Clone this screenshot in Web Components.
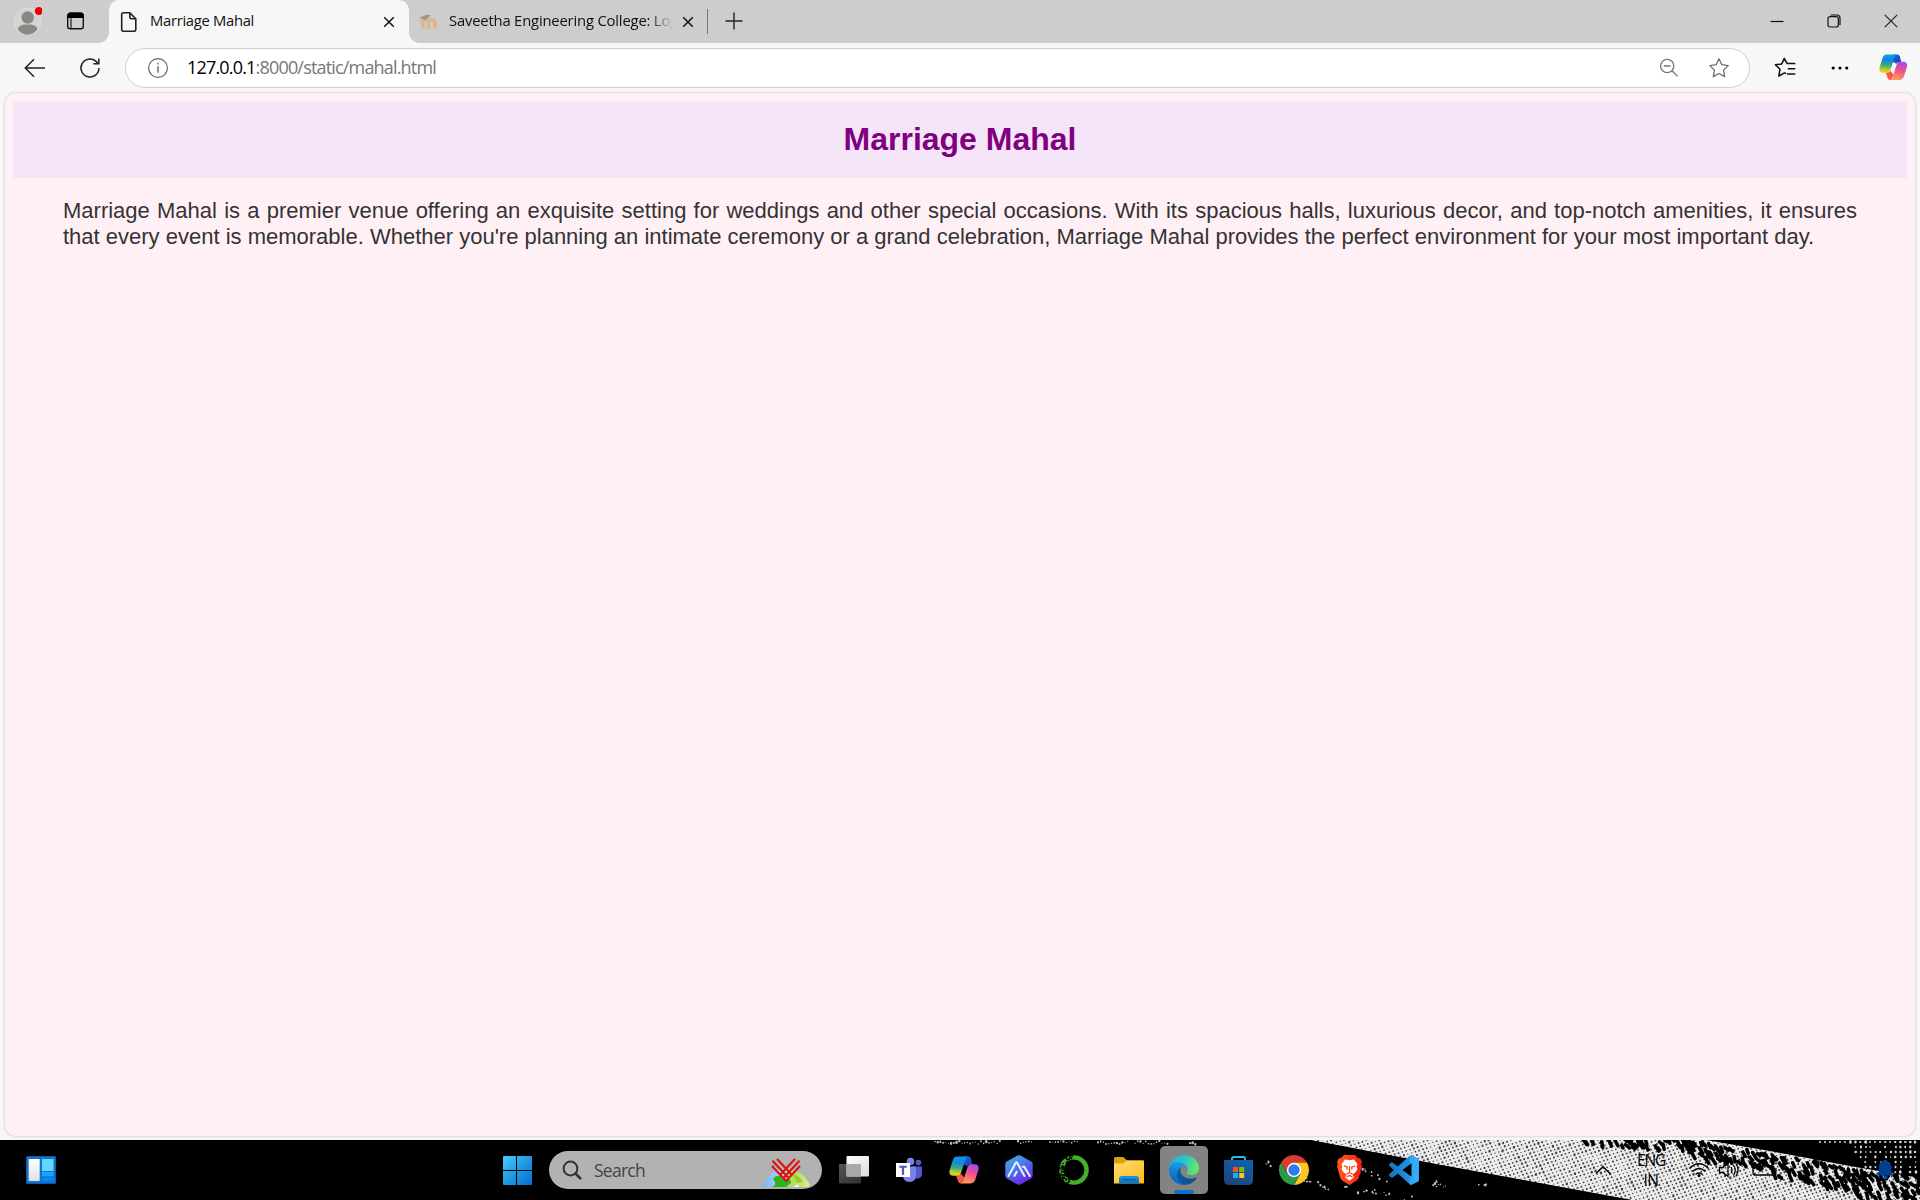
<!DOCTYPE html>
<html lang="en">
<head>
<meta charset="utf-8">
<title>Marriage Mahal</title>
<style>
html,body{margin:0;height:100%;overflow:hidden;background:#f7f7f7}
body{font-family:"Open Sans","Noto Sans",sans-serif}
</style>
</head>
<body>
<desktop-screen></desktop-screen>
<script>
const define=(name,html,init)=>customElements.define(name,class extends HTMLElement{
  connectedCallback(){
    if(this.shadowRoot)return;
    const t=document.createElement('template');
    t.innerHTML=typeof html==='function'?html(this):html;
    this.attachShadow({mode:'open'}).appendChild(t.content.cloneNode(true));
    if(init)init(this);
  }
});

/* name: [width, height, markup] */
const copilot=`<defs>
<linearGradient id="a" x1=".4" y1="0" x2=".3" y2="1"><stop offset="0" stop-color="#0a9bea"/><stop offset=".3" stop-color="#1287dc"/><stop offset=".6" stop-color="#3fae7c"/><stop offset=".85" stop-color="#c9cf2a"/><stop offset="1" stop-color="#f5d00c"/></linearGradient>
<linearGradient id="b" x1=".7" y1="0" x2=".4" y2="1"><stop offset="0" stop-color="#a44df0"/><stop offset=".45" stop-color="#ee4f8f"/><stop offset="1" stop-color="#ff9a5a"/></linearGradient>
<linearGradient id="c" x1="0" y1="0" x2="1" y2="1"><stop offset="0" stop-color="#1a6de6"/><stop offset="1" stop-color="#1d35b8"/></linearGradient></defs>
<path fill="url(#c)" d="M15 1.600h4.200c1.400 0 2.300.8 2.700 2.100l1.600 5.700h-1.800c-1.600 0-2.600.4-3.400 1.800L14 9z"/>
<path fill="#fb5a3c" d="M7 20.600h1.800c1.700 0 2.600-.5 3.300-1.800l3.200 4-2.500 5.600h-.9c-1.500 0-2.400-.9-2.900-2.400z"/>
<path fill="url(#a)" d="M8.600 1.600H19c-1.300.2-2.100 1.200-2.600 2.800l-4.200 13c-.6 2-1.600 3.400-3.300 3.400H4.300C1.100 20.800-.3 18.500.6 15.300L3.500 6C4.400 3.100 5.900 1.600 8.600 1.600z"/>
<path fill="url(#b)" d="M21.400 28.400H11.600c1.300-.2 2.100-1.200 2.600-2.800l4.200-13c.6-2 1.600-3.400 3.300-3.400h4c3.200 0 4.600 2.300 3.700 5.500L26.500 24c-.9 2.900-2.400 4.400-5.100 4.400z"/>`;

const ringSpecks=(()=>{
  let s=11,d='';const r=()=>(s=(s*16807)%2147483647)/2147483647;
  for(let k=0;k<64;k++){
    const t=(112+r()*152)*Math.PI/180,q=10.200+r()*5;
    d+=`<circle cx="${(15+Math.cos(t)*q).toFixed(1)}" cy="${(15+Math.sin(t)*q).toFixed(1)}" r="${(.5+r()*.6).toFixed(1)}"/>`;
  }
  return d;
})();

const ICONS={
profile:[28,30,`<circle cx="13.500" cy="15.500" r="13.500" fill="#d6d4d1" stroke="#e2e0dc" stroke-width=".8"/><circle cx="13.700" cy="11.500" r="6.200" fill="#8a8886"/><path fill="#8a8886" d="M3.500 22.500C6 18.500 10 18.500 13.500 18.500s7.500 0 10 4c-2 4-6 6.200-10 6.200s-8-2.200-10-6.200z"/><circle cx="24.800" cy="5" r="4.500" fill="#e60008" stroke="#eee" stroke-width=".8"/>`],
vtabs:[20,20,`<rect x="1.700" y="2.200" width="15.600" height="15.600" rx="2.600" fill="none" stroke="#111" stroke-width="1.400"/><path fill="#000" d="M1.500 7V4.500Q1.500 1.500 4.500 1.500h10q3 0 3 3V7z"/><path d="M5 7v10.500" stroke="#111" stroke-width="1.100"/>`],
page:[18,22,`<path fill="none" stroke="#222" stroke-width="1.600" stroke-linejoin="round" d="M3.600 1.800h6.200l6 6v10.400q0 2-2 2H3.700q-2 0-2-2V3.700q0-1.900 1.900-1.900zM9.800 2v3.800q0 2 2 2h3.900"/>`],
x:[14,14,`<path d="M2.200 2.200l9.600 9.600M11.800 2.200l-9.600 9.600" stroke="#111" stroke-width="1.500" fill="none"/>`],
moodle:[20,16,`<g opacity=".8"><path fill="none" stroke="#e5ae7d" stroke-width="3.500" d="M4.700 14.800V9q0-3.300 2.900-3.300T10.500 9v5.800M10.500 9q0-3.300 3.300-3.300T17.200 9v5.800"/><path fill="#8a8a88" d="M1.500 3.500 9 .8l4 .8-3.500 2.700L8.300 6 4 5z"/><path d="M2.500 4 .8 9" stroke="#c9b9a8"/></g>`],
plus:[18,18,`<path d="M9 .5v17M.5 9h17" stroke="#222" stroke-width="1.400"/>`],
min:[14,14,`<path d="M.5 7.500h13" stroke="#111" stroke-width="1.200"/>`],
max:[14,14,`<rect x="1" y="2.700" width="10.300" height="10.300" rx="2" fill="none" stroke="#111" stroke-width="1.200"/><path d="M3.500 1h6.500q3 0 3 3v7" fill="none" stroke="#111" stroke-width="1.200"/>`],
close:[14,14,`<path d="M.8.8l12.400 12.400M13.200.8.8 13.200" stroke="#222" stroke-width="1.200"/>`],
back:[22,20,`<path d="M21 10H1.500M10 1.300 1.300 10l8.700 8.700" fill="none" stroke="#222" stroke-width="1.500"/>`],
reload:[22,22,`<path d="M20 11a9 9 0 1 1-3.200-6.900L19 6.200M19.800 1.500v5.200h-5.400" fill="none" stroke="#222" stroke-width="1.500"/>`],
info:[22,22,`<circle cx="11" cy="11" r="9.400" fill="none" stroke="#666" stroke-width="1.200"/><path d="M11 9.300v6.500M11 5.800v1.700" stroke="#666" stroke-width="1.400"/>`],
zoomout:[20,20,`<circle cx="8.200" cy="8" r="6.600" fill="none" stroke="#777" stroke-width="1.300"/><path d="M4.800 8h6.800M13 12.800l5.600 5.600" stroke="#777" stroke-width="1.300"/>`],
star:[22,22,`<path fill="none" stroke="#6e6e6e" stroke-width="1.300" stroke-linejoin="round" d="M11 1.800l2.800 5.900 6.400.9-4.700 4.500 1.200 6.500L11 16.500l-5.700 3.100 1.200-6.500L1.800 8.600l6.400-.9z"/>`],
favs:[22,22,`<path fill="none" stroke="#111" stroke-width="1.500" stroke-linejoin="round" d="M14 6.300l-1.200-.2L10.300 1.400 7.700 6.900l-6.300.9 4.600 4.500-1.200 6.700 5.700-3.100 1.500.8M12.800 6.500h8.500M13.800 11.700h7.500M12.800 17h8.500"/>`],
dots:[18,6,`<circle cx="2.200" cy="3" r="1.600"/><circle cx="9" cy="3" r="1.600"/><circle cx="15.700" cy="3" r="1.600"/>`],
copilot:[30,30,copilot],
widgets:[30,28,`<defs><linearGradient id="w" x2="0" y2="1"><stop stop-color="#fff"/><stop offset="1" stop-color="#dfe0e3"/></linearGradient></defs><rect width="30" height="28" rx="1.500" fill="#0b5cab"/><rect x="1" y="1" width="28" height="26" fill="#1173c8"/><rect x="2.700" y="3" width="11" height="22" rx=".6" fill="url(#w)"/><rect x="16" y="3" width="11.500" height="12" fill="#62d6ff"/><rect x="16" y="16" width="11.500" height="4.300" fill="#1ba2fa"/><rect x="16" y="21.300" width="11.500" height="3.900" fill="#0a84ee"/>`],
start:[30,30,`<defs><linearGradient id="s" gradientUnits="userSpaceOnUse" x1="0" y1="0" x2="30" y2="30"><stop stop-color="#52d0fb"/><stop offset=".5" stop-color="#1e9be3"/><stop offset="1" stop-color="#0670cf"/></linearGradient></defs><path fill="url(#s)" d="M2 1h12v14H1V2q0-1 1-1zM15 1h14q1 0 1 1v13H15zM1 16h13v14H2q-1 0-1-1zM15 16h15v13q0 1-1 1H15z"/>`],
search:[20,20,`<circle cx="8.500" cy="8.500" r="6.900" fill="none" stroke="#333" stroke-width="2"/><path d="M13.500 13.500l4.800 4.800" stroke="#333" stroke-width="2.600" stroke-linecap="round"/>`],
earth:[50,30,`<defs><linearGradient id="e"><stop stop-color="#7fb1f5"/><stop offset=".4" stop-color="#a8d7ee"/><stop offset=".65" stop-color="#b6dc52"/><stop offset="1" stop-color="#dcec9a"/></linearGradient></defs><path fill="url(#e)" d="M1 28Q9 11 25 11t24 16l-1.500 2H2z"/><path fill="#2fb31c" d="M12 21q3-4 8-3l4 4 5-1 1 4-5 4H11q6-3 1-8z"/><path fill="#8ed12a" d="M31 16q7 1 11 8l-6 1z"/><path fill="#e3f4fa" d="M32 29l4-3 3 3z"/><g fill="none" stroke="#dd1017" stroke-width="2.100"><path d="M11 8 25 23 39 8M11.500 2.800 28 20.500M38.500 2.800 22 20.500M16 1 31 17M34 1 19 17"/></g>`],
taskview:[30,30,`<defs><linearGradient id="t" x2="1" y2="1"><stop stop-color="#fdfdfd"/><stop offset="1" stop-color="#dcdcdc"/></linearGradient><linearGradient id="u" x2="1" y2="1"><stop stop-color="#555"/><stop offset="1" stop-color="#303030"/></linearGradient></defs><rect x="0" y="9" width="22" height="19.500" rx="1" fill="url(#u)"/><rect x="7.500" y="1" width="22.500" height="20.500" rx="1" fill="url(#t)"/><path d="M7.500 9H22v12.500H7.500z" fill="#a9a9a9"/>`],
teams:[30,30,`<circle cx="24.500" cy="7.600" r="2.800" fill="#5059c9"/><path fill="#5059c9" d="M18 11.500h10v7q0 5-5 5h-5z"/><circle cx="16.500" cy="6.500" r="3.800" fill="#7b83eb"/><path fill="#7b83eb" d="M9 11.500h13v9q0 6.500-6.500 6.500T9 20.500z"/><rect x="2" y="8" width="14" height="14" fill="#fff"/><path fill="#4b53bc" d="M5.300 10.700h7.400v2.100h-2.600v7H7.900v-7H5.300z"/>`],
hex:[30,30,`<defs><linearGradient id="h" x2=".6" y2="1"><stop stop-color="#43b4ee"/><stop offset=".5" stop-color="#4b78ea"/><stop offset="1" stop-color="#6a25e4"/></linearGradient></defs><path fill="url(#h)" d="M13.500.6q1.500-.8 3 0l10.700 6q1.500.9 1.500 2.600v11.600q0 1.700-1.500 2.600l-10.700 6q-1.500.8-3 0l-10.700-6q-1.500-.9-1.500-2.600V9.200q0-1.700 1.500-2.600z"/><path fill="none" stroke="#e8f2ff" stroke-width="2" stroke-linecap="round" stroke-linejoin="round" d="M4.500 21 11.800 7.800q.7-1 1.400 0L20.500 21M10.500 20.800l2.200-4M18.700 11.800h1.600L25.800 21"/>`],
anaconda:[30,30,`<circle cx="15" cy="15" r="12.600" fill="none" stroke="#43b02a" stroke-width="4.400"/>${ringSpecks}`],
folder:[30,30,`<defs><linearGradient id="f" x2=".8" y2="1"><stop stop-color="#ffdf72"/><stop offset="1" stop-color="#fdbb1d"/></linearGradient><linearGradient id="g" x2="0" y2="1"><stop stop-color="#1896e4"/><stop offset="1" stop-color="#0c6fc1"/></linearGradient></defs><path fill="#e0a008" d="M0 3.500Q0 2 1.500 2H8q1.500 0 2.500 1l2.500 2.500H28q2 0 2 2V15H0z"/><path fill="url(#f)" d="M0 8.500h9l3.500-3H30v23H0z"/><path fill="url(#g)" d="M5 28.500V24q0-3 3-3h14q3 0 3 3v4.500z"/><path d="M8.500 24.700h13" stroke="#0a5aa5" stroke-width="1.200"/>`],
edge:[30,30,`<defs><linearGradient id="p"><stop offset=".1" stop-color="#0c59a4"/><stop offset="1" stop-color="#114a8b"/></linearGradient><linearGradient id="q" x1=".6" y1=".1" x2=".3" y2="1"><stop stop-color="#1b9de2"/><stop offset=".5" stop-color="#0d80d0"/><stop offset="1" stop-color="#0a60b4"/></linearGradient><linearGradient id="r" x1="0" y1=".3" x2="1" y2=".6"><stop stop-color="#2aa9e0"/><stop offset=".45" stop-color="#2fc2c9"/><stop offset="1" stop-color="#66eb62"/></linearGradient></defs><g transform="scale(.1172)"><path fill="url(#p)" d="M231.070 190.540a93.180 93.180 0 0 1-10.540 4.710 101.860 101.860 0 0 1-35.900 6.460c-47.320 0-88.540-32.550-88.540-74.320A31.480 31.480 0 0 1 112.520 100.100C69.720 101.900 58.720 146.500 58.720 172.630c0 73.880 68.090 81.370 82.760 81.370 7.910 0 19.840-2.300 27-4.560l1.310-.44A128.340 128.340 0 0 0 236.370 195.400 4 4 0 0 0 231.070 190.540Z"/><path fill="url(#q)" d="M105.730 241.420A79.200 79.200 0 0 1 83 220.080a80.720 80.720 0 0 1 29.500-120c3.120-1.470 8.450-4.130 15.540-4a32.350 32.350 0 0 1 25.690 13 31.880 31.880 0 0 1 6.360 18.660c0-.21 24.460-79.600-80-79.600C36.180 48.200 0 89.860 0 126.410A130.200 130.200 0 0 0 12.110 182.770a128 128 0 0 0 156.380 67.110 75.550 75.550 0 0 1-62.780-8Z"/><path fill="url(#r)" d="M152.330 148.860c-.81 1.050-3.300 2.500-3.300 5.660 0 2.610 1.700 5.120 4.720 7.230 14.380 10 41.490 8.680 41.560 8.680a59.560 59.560 0 0 0 30.270-8.350A61.380 61.380 0 0 0 256 109.180c.26-22.410-8-37.310-11.340-43.910C223.460 23.840 177.720 0 128 0A128 128 0 0 0 0 126.200C.48 89.690 36.760 60.200 80 60.200c3.500 0 23.460.34 42 10.070 16.340 8.580 24.900 18.940 30.850 29.210 6.180 10.670 7.280 24.150 7.280 29.520S157.400 142.330 152.330 148.860Z"/></g>`],
store:[30,30,`<defs><linearGradient id="k" x1="0" y1="1" x2=".6" y2="0"><stop stop-color="#1f4173"/><stop offset="1" stop-color="#1160ac"/></linearGradient></defs><path d="M8 7V3.800Q8 2 9.800 2h9.400Q21 2 21 3.800V7" fill="none" stroke="#2fb8ee" stroke-width="1.900"/><path fill="url(#k)" d="M0 5h29v20q0 5-5 5H5q-5 0-5-5z"/><path fill="#f25022" d="M9 12h5v5H9z"/><path fill="#7fba00" d="M15.200 12h5v5h-5z"/><path fill="#28a8ee" d="M9 18h5v5H9z"/><path fill="#ffc420" d="M15.200 18h5v5h-5z"/>`],
chrome:[30,30,`<path fill="#de3b30" d="M2.010 7.500A15 15 0 0 1 27.990 7.500H15L8.500 18.750z"/><path fill="#fdc521" d="M27.990 7.500A15 15 0 0 1 15 30L21.500 18.750 15 7.500z"/><path fill="#2a9a48" d="M15 30A15 15 0 0 1 2.010 7.500L8.500 18.750H21.500z"/><circle cx="15" cy="15" r="7.200" fill="#fff"/><circle cx="15" cy="15" r="5.700" fill="#2b7af0"/>`],
brave:[30,30,`<defs><linearGradient id="v"><stop stop-color="#ff5a22"/><stop offset="1" stop-color="#f5200f"/></linearGradient></defs><path fill="url(#v)" d="M10 0h11l3 3 2.300.5 1.700 3.500-.8 2 .8 2.300-3.500 12.200Q24 25.200 15.500 30 7 25.200 6.500 23.500L3 11.300 3.800 9 3 7l1.700-3.500L7 3z"/><path fill="#fff" d="M15.500 5.200 20 4.500l3.500 4.700-1 2.600 1 2.200-2 3.200-3.200 2.200 1.700 2.800-4.500 3.500L11 22.200l1.700-2.800-3.200-2.200-2-3.200 1-2.200-1-2.600L11 4.500z"/><path d="M9.800 10.800l3.500 1.400-.3 2.500M21.200 10.800l-3.500 1.400.3 2.500M12.500 19.200l3-1.700 3 1.700M15.500 11v6.500M12.500 22l3-1.500 3 1.500" fill="none" stroke="#f83a18" stroke-width="1.200"/>`],
vscode:[30,30,`<defs><linearGradient id="z"><stop stop-color="#1273bd"/><stop offset=".68" stop-color="#1f93e0"/><stop offset=".7" stop-color="#2fa8f4"/><stop offset="1" stop-color="#35acf7"/></linearGradient></defs><path fill="url(#z)" transform="scale(1.250)" d="M23.150 2.587L18.210.21a1.494 1.494 0 0 0-1.705.29l-9.460 8.630-4.120-3.128a.999.999 0 0 0-1.276.057L.327 7.261A1 1 0 0 0 .326 8.740L3.899 12 .326 15.260a1 1 0 0 0 .001 1.479L1.650 17.940a.999.999 0 0 0 1.276.057l4.120-3.128 9.460 8.630a1.492 1.492 0 0 0 1.704.29l4.942-2.377A1.500 1.500 0 0 0 24 20.060V3.939a1.500 1.500 0 0 0-.85-1.352zm-5.146 14.861L10.826 12l7.178-5.448v10.896z"/>`],
chevron:[16,10,`<path d="M1 8.500 8 1.800l7 6.700" fill="none" stroke="#000" stroke-width="1.500"/>`],
wifi:[22,18,`<g fill="none" stroke="#000" stroke-width="1.500"><path d="M1.500 7.500q9.500-9.500 19 0M4.500 10.500q6.500-6 13 0M7.500 13.500q3.500-3 7 0"/></g><circle cx="11" cy="14.500" r="1.500"/>`],
sound:[22,18,`<path d="M1.500 6.500H5l5-4.500v13.500L5 11.500H1.500zM13 6q2 3 0 6M15.500 4q3.500 5 0 10.500M18 2.500q4 6.500 0 13" fill="none" stroke="#000" stroke-width="1.300"/>`],
battery:[26,16,`<path d="M3 4h17q2 0 2 2v5q0 2-2 2H3q-2 0-2-2V6q0-2 2-2zM22 7h2v3h-2" fill="none" stroke="#000" stroke-width="1.300"/>`],
bell:[18,20,`<path fill="#003f95" d="M9 .5q6 .2 6.200 6.500v4.500L17 14.700q.3.800-.6.800H1.600q-.9 0-.6-.8l1.800-3.200V7Q3 .7 9 .5z"/><path fill="#0a63c4" d="M6 16.500h6q-.6 2.500-3 2.500t-3-2.500z"/>`]
};
define('ui-icon',el=>{
  const [w,h,m]=ICONS[el.getAttribute('name')],s=+el.getAttribute('scale')||1;
  return `<style>:host{display:block;flex:none;width:${w*s}px;height:${h*s}px}svg{display:block}</style><svg width="${w*s}" height="${h*s}" viewBox="0 0 ${w} ${h}">${m}</svg>`;
});

/* A single line of text spaced out to a given width */
define('fit-label',`<style>:host{display:block;white-space:pre;line-height:1.4;flex:none}span{display:inline-block}</style><span><slot></slot></span>`,el=>{
  const target=+el.getAttribute('fit');
  const span=el.shadowRoot.querySelector('span');
  const w=span.getBoundingClientRect().width;
  span.style.letterSpacing=((target-w)/el.textContent.length)+'px';
});

define('browser-tab',el=>{
  const on=el.hasAttribute('active');
  return `<style>
  :host{display:flex;align-items:center;height:43px;box-sizing:border-box;position:relative;font-size:14.800px;color:#111;${on?'width:300px;background:#f7f7f7;border-radius:10px 10px 0 0;padding:0 13px 0 11px':'width:298px;padding:0 12px 0 9px'}}
  .t{flex:1;overflow:hidden;margin-top:-2px;margin-left:${on?'12px':'11px'};margin-right:${on?'10px':'9px'};${on?'':'-webkit-mask-image:linear-gradient(90deg,#000 200px,transparent 224px);'}}
  ui-icon{margin-top:1px}
  .fl{position:absolute;bottom:0;width:10px;height:10px;background:radial-gradient(circle at var(--x) 0,transparent 9.500px,#f7f7f7 10px)}
  .l{left:-10px;--x:0}.r{right:-10px;--x:10px}
  </style><ui-icon name="${on?'page':'moodle'}"></ui-icon><div class="t"><slot></slot></div><ui-icon name="x"></ui-icon>${on?'<i class="fl l"></i><i class="fl r"></i>':''}`;
});

define('tab-strip',`<style>
:host{display:flex;align-items:center;height:43px;background:#cdcdcd;padding-left:14px;box-sizing:border-box}
.prof{margin:-2px 24px 0 0}.vt{margin-right:23px;margin-top:-2px}
.sep{width:1px;height:25px;background:#777;margin-right:17px}.plus{margin-top:-1px}
.win{margin-left:auto;display:flex;gap:43px;padding-right:22px;margin-top:-1px}
</style><ui-icon class="prof" name="profile"></ui-icon><ui-icon class="vt" name="vtabs"></ui-icon>
<browser-tab active><fit-label fit="104">Marriage Mahal</fit-label></browser-tab>
<browser-tab><fit-label fit="229">Saveetha Engineering College: Log</fit-label></browser-tab>
<i class="sep"></i><ui-icon class="plus" name="plus"></ui-icon>
<div class="win"><ui-icon name="min"></ui-icon><ui-icon name="max"></ui-icon><ui-icon name="close"></ui-icon></div>`);

define('address-bar',`<style>
:host{display:flex;align-items:center;width:1625px;height:40px;box-sizing:border-box;background:#fff;border:1px solid #cfcfcf;border-radius:20px;padding:0 19px 0 21px}
.u{font-size:18px;color:#777;margin:0 auto 0 18px}.z{margin-right:29px}
</style><ui-icon name="info"></ui-icon><div class="u"><slot></slot></div><ui-icon class="z" name="zoomout"></ui-icon><ui-icon name="star"></ui-icon>`);

define('tool-bar',`<style>
:host{display:flex;align-items:center;height:49px;background:#f7f7f7;padding-left:24px;box-sizing:border-box}
address-bar{margin:0 24px}.b{margin-right:33px}.f{margin-right:35px}.d{margin-right:30px}b{font-weight:400;color:#000}
</style><ui-icon class="b" name="back"></ui-icon><ui-icon name="reload"></ui-icon>
<address-bar><fit-label fit="249"><b>127.0.0.1</b>:8000/static/mahal.html</fit-label></address-bar>
<ui-icon class="f" name="favs"></ui-icon><ui-icon class="d" name="dots"></ui-icon><ui-icon name="copilot" scale=".95"></ui-icon>`);

define('mahal-page',`<style>
:host{display:block;box-sizing:border-box;height:1043px;margin:1px 5px 0;padding:8px;background:#fff0f5;border-radius:11px;box-shadow:0 0 3px rgba(0,0,0,.25);font-family:"Liberation Sans",Arial,sans-serif}
header{height:77px;background:#f4e6f8;display:flex;align-items:center;justify-content:center}
h1{margin:0;font-size:32px;line-height:37px;color:purple}
p{margin:20px 50px 0;font-size:22px;line-height:26px;color:#333;text-align:justify}
</style><header><h1><slot name="title"></slot></h1></header><p><slot></slot></p>`);

/* Halftone wallpaper that shows through the right part of the taskbar */
define('halftone-art',()=>{
  let seed=7;const rnd=()=>(seed=(seed*16807)%2147483647)/2147483647;
  const n=v=>v.toFixed(1);
  let dark='',blob='',white='',top='';
  const dot=(x,y,r)=>`M${n(x-r)} ${n(y)}a${n(r)} ${n(r)} 0 1 0 ${n(2*r)} 0a${n(r)} ${n(r)} 0 1 0 ${n(-2*r)} 0`;
  const edge=x=>x<1690?-2:(x-1690)*.165;
  const low=x=>x<1670?2+(x-1585)*.06:7+(x-1670)*.24;
  for(let i=-60;i<200;i++)for(let j=-110;j<110;j++){
    const x=1300+i*3.8+j*1.6,y=i*-1.2+j*3.3+90;
    if(x<1300||x>1925||y<-2||y>62)continue;
    dark+=dot(x,y,.6+rnd()*.5);
  }
  for(let x=1580;x<1925;x+=4.500)for(let y=edge(x);y<Math.min(low(x),66);y+=6){
    if(rnd()<.2)continue;
    blob+=`M${n(x+rnd()*4)} ${n(y+rnd()*4)}l${n(1+rnd()*3)} ${n(2+rnd()*5)}`;
  }
  for(let x=1850;x<1920;x+=5)for(let y=2;y<34;y+=5)if(x-1845>y*.7&&rnd()>.12)white+=dot(x+rnd(),y,.7+rnd()*.6);
  for(let x=1820;x<1920;x+=5)white+=dot(x,2,1);
  for(const [a,b,h] of [[935,1000,3],[1018,1034,4],[1050,1078,2],[1098,1130,3],[1135,1170,3],[1190,1198,4]])
    for(let x=a;x<b;x+=2.700)top+=dot(x,rnd()*h+1,.5+rnd()*.8);
  for(const [x0,y0,x1,y1,c] of [[1262,22,1330,50,30],[1340,48,1410,58,16],[1418,40,1445,46,10],[1358,30,1385,40,9],[1475,42,1484,44,5]])
    for(let k=0;k<c;k++){const t=rnd();top+=dot(x0+(x1-x0)*t+rnd()*4,y0+(y1-y0)*t+rnd()*6-3,.5+rnd()*.7);}
  return `<style>:host{display:block;width:1920px;height:60px}svg{display:block}</style>
  <svg width="1920" height="60"><rect width="1920" height="60" fill="#000"/>
  <path fill="#ececec" d="M1310 0H1920V60H1632L1430 23z"/>
  <path fill="#444" d="${dark}"/>
  <path fill="none" stroke="#000" stroke-width="3.500" stroke-linecap="round" d="${blob}"/>
  <path fill="#000" d="M1700 -1H1920V38L1850 26 1770 11z"/>
  <path fill="#000" d="M1300 -2 1430 23 1636 61H1300z"/>
  <path fill="#d8d8d8" d="${white}"/><path fill="#bbb" d="${top}"/></svg>`;
});

define('task-app',el=>`<style>
:host{display:flex;flex:none;width:55px;height:60px;align-items:center;justify-content:center;box-sizing:border-box;padding-right:1px}
div{display:flex;width:48px;height:48px;align-items:center;justify-content:center;border-radius:5px;position:relative}
:host([open]) div{background:#838383}
:host([open]) div::after{content:"";position:absolute;left:14px;bottom:0;width:20px;height:4px;border-radius:2px;background:#0f6fc6}
</style><div><ui-icon name="${el.getAttribute('icon')}"></ui-icon></div>`);

define('search-pill',`<style>
:host{display:flex;align-items:center;width:273px;height:38px;border-radius:19px;background:#b2b2b2;box-sizing:border-box;padding:0 11px 0 13px;font-size:17.500px;color:#444;overflow:hidden}
.t{margin:0 auto 0 12px}.e{margin-top:6px}
</style><ui-icon name="search"></ui-icon><div class="t"><slot></slot></div><ui-icon class="e" name="earth"></ui-icon>`);

define('task-bar',`<style>
:host{display:block;height:60px;background:#000;position:relative}
halftone-art{position:absolute;inset:0}
.row{position:relative;display:flex;align-items:center;height:60px;padding-left:26px}
.start{margin:0 17px 0 446px}search-pill{margin-right:5px;margin-top:0}
.tray{display:flex;align-items:center;margin-left:163px}
.lang{display:flex;flex-direction:column;align-items:center;width:30px;margin:0 22px 0 25px;font-size:15.500px;color:#000;line-height:20px}
.lang fit-label{line-height:20px}.snd{margin:0 12px 0 8px}.bell{margin-left:98px}
</style><halftone-art></halftone-art><div class="row">
<ui-icon name="widgets"></ui-icon><ui-icon class="start" name="start"></ui-icon>
<search-pill><fit-label fit="51">Search</fit-label></search-pill>
<task-app icon="taskview"></task-app><task-app icon="teams"></task-app><task-app icon="copilot"></task-app><task-app icon="hex"></task-app><task-app icon="anaconda"></task-app><task-app icon="folder"></task-app><task-app icon="edge" open></task-app><task-app icon="store"></task-app><task-app icon="chrome"></task-app><task-app icon="brave"></task-app><task-app icon="vscode"></task-app>
<div class="tray"><ui-icon name="chevron"></ui-icon><div class="lang"><fit-label fit="28">ENG</fit-label><fit-label fit="15">IN</fit-label></div><ui-icon name="wifi"></ui-icon><ui-icon class="snd" name="sound"></ui-icon><ui-icon name="battery"></ui-icon><ui-icon class="bell" name="bell"></ui-icon></div>
</div>`);

define('desktop-screen',`<style>:host{display:flex;flex-direction:column;width:1920px;height:1200px;background:#f7f7f7;overflow:hidden}task-bar{margin-top:auto}</style>
<tab-strip></tab-strip><tool-bar></tool-bar>
<mahal-page><span slot="title">Marriage Mahal</span>Marriage Mahal is a premier venue offering an exquisite setting for weddings and other special occasions. With its spacious halls, luxurious decor, and top-notch amenities, it ensures that every event is memorable. Whether you're planning an intimate ceremony or a grand celebration, Marriage Mahal provides the perfect environment for your most important day.</mahal-page>
<task-bar></task-bar>`);
</script>
</body>
</html>
